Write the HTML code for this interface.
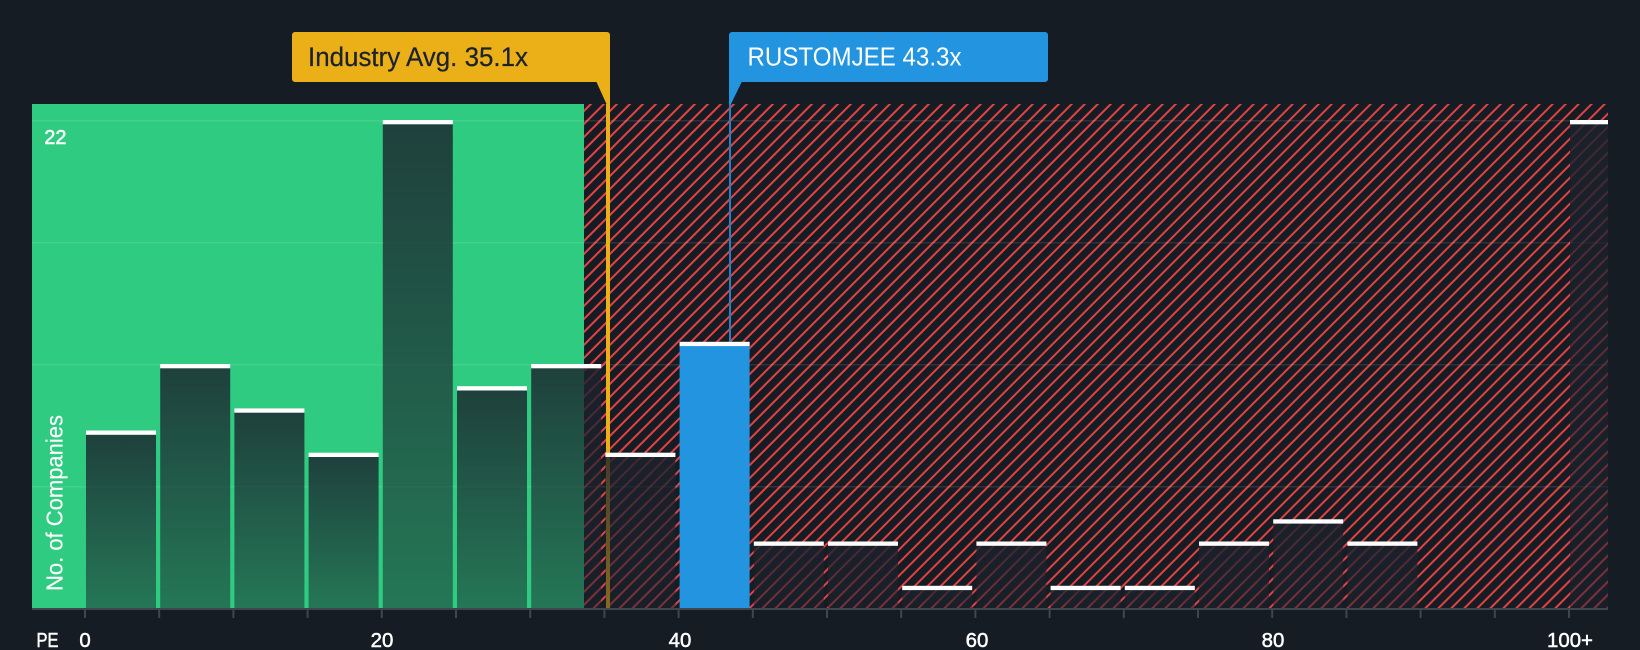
<!DOCTYPE html>
<html>
<head>
<meta charset="utf-8">
<style>
html,body{margin:0;padding:0;background:#151c24;width:1640px;height:650px;overflow:hidden}
svg{display:block}
text{font-family:"Liberation Sans",sans-serif}
</style>
</head>
<body>
<svg width="1640" height="650" viewBox="0 0 1640 650" xmlns="http://www.w3.org/2000/svg">
<defs>
<pattern id="h" patternUnits="userSpaceOnUse" width="9.19" height="9.19" patternTransform="rotate(45)">
<rect x="3.33" y="0" width="2" height="9.19" fill="#e44243"/>
</pattern>
<linearGradient id="g" x1="0" y1="0" x2="0" y2="1">
<stop offset="0" stop-color="#1b222d" stop-opacity=".82"/>
<stop offset="1" stop-color="#1b222d" stop-opacity=".5"/>
</linearGradient>
</defs>
<rect width="1640" height="650" fill="#151c24"/>
<rect x="32" y="104" width="552" height="504" fill="#2ecb80"/>
<rect x="584" y="104" width="1024" height="504" fill="url(#h)"/>
<g fill="#fff" fill-opacity=".1">
<rect x="32" y="120" width="1576" height="1.5"/>
<rect x="32" y="242" width="1576" height="1.5"/>
<rect x="32" y="364" width="1576" height="1.5"/>
<rect x="32" y="486" width="1576" height="1.5"/>
</g>
<rect x="606" y="104" width="4" height="504" fill="#ebb018"/>
<rect x="729" y="104" width="2" height="504" fill="#2a7fc4"/>
<g fill="url(#g)">
<rect x="86" y="434.5" width="70" height="173.5"/>
<rect x="160.2" y="368" width="70" height="240"/>
<rect x="234.4" y="412.4" width="70" height="195.6"/>
<rect x="308.6" y="456.7" width="70" height="151.3"/>
<rect x="382.8" y="124" width="70" height="484"/>
<rect x="457" y="390.2" width="70" height="217.8"/>
<rect x="531.2" y="368" width="70" height="240"/>
<rect x="605.4" y="456.7" width="70" height="151.3"/>
<rect x="753.8" y="545.5" width="70" height="62.5"/>
<rect x="828" y="545.5" width="70" height="62.5"/>
<rect x="902.2" y="589.8" width="70" height="18.2"/>
<rect x="976.4" y="545.5" width="70" height="62.5"/>
<rect x="1050.6" y="589.8" width="70" height="18.2"/>
<rect x="1124.8" y="589.8" width="70" height="18.2"/>
<rect x="1199" y="545.5" width="70" height="62.5"/>
<rect x="1273.2" y="523.3" width="70" height="84.7"/>
<rect x="1347.4" y="545.5" width="70" height="62.5"/>
<rect x="1570" y="124" width="38" height="484"/>
</g>
<rect x="679.6" y="342" width="70" height="266" fill="#2394e0"/>
<g fill="#fff">
<rect x="86" y="430.5" width="70" height="4.3"/>
<rect x="160.2" y="364" width="70" height="4.3"/>
<rect x="234.4" y="408.4" width="70" height="4.3"/>
<rect x="308.6" y="452.7" width="70" height="4.3"/>
<rect x="382.8" y="120" width="70" height="4.3"/>
<rect x="457" y="386.2" width="70" height="4.3"/>
<rect x="531.2" y="364" width="70" height="4.3"/>
<rect x="605.4" y="452.7" width="70" height="4.3"/>
<rect x="679.6" y="341.8" width="70" height="4.3"/>
<rect x="753.8" y="541.5" width="70" height="4.3"/>
<rect x="828" y="541.5" width="70" height="4.3"/>
<rect x="902.2" y="585.8" width="70" height="4.3"/>
<rect x="976.4" y="541.5" width="70" height="4.3"/>
<rect x="1050.6" y="585.8" width="70" height="4.3"/>
<rect x="1124.8" y="585.8" width="70" height="4.3"/>
<rect x="1199" y="541.5" width="70" height="4.3"/>
<rect x="1273.2" y="519.3" width="70" height="4.3"/>
<rect x="1347.4" y="541.5" width="70" height="4.3"/>
<rect x="1570" y="120" width="38" height="4.3"/>
</g>
<rect x="32" y="608" width="1576" height="2" fill="#3f4650"/>
<path fill="#3f4650" d="M84 610h2v8h-2zM158.2 610h2v8h-2zM232.4 610h2v8h-2zM306.6 610h2v8h-2zM380.8 610h2v8h-2zM455 610h2v8h-2zM529.2 610h2v8h-2zM603.4 610h2v8h-2zM677.6 610h2v8h-2zM751.8 610h2v8h-2zM826 610h2v8h-2zM900.2 610h2v8h-2zM974.4 610h2v8h-2zM1048.6 610h2v8h-2zM1122.8 610h2v8h-2zM1197 610h2v8h-2zM1271.2 610h2v8h-2zM1345.4 610h2v8h-2zM1419.6 610h2v8h-2zM1493.8 610h2v8h-2zM1568 610h2v8h-2z"/>
<path fill="#ebb018" d="M295 32H607a3 3 0 0 1 3 3V104H606.5L596.5 82H295a3 3 0 0 1-3-3V35a3 3 0 0 1 3-3z"/>
<path fill="#2394e0" d="M732 32H1045a3 3 0 0 1 3 3V79a3 3 0 0 1-3 3H741.7L731 104H729V35a3 3 0 0 1 3-3z"/>
<text x="308" y="66" font-size="26.5" fill="#1b222d" textLength="220" lengthAdjust="spacingAndGlyphs" stroke="#1b222d" stroke-width=".25">Industry Avg. 35.1x</text>
<text x="747.5" y="65.5" font-size="26" fill="#fff" textLength="214" lengthAdjust="spacingAndGlyphs">RUSTOMJEE 43.3x</text>
<text x="44.3" y="144" font-size="20" fill="#fff" stroke="#fff" stroke-width=".5">22</text>
<text transform="translate(62.3 591) rotate(-90)" font-size="23.5" fill="#fff" stroke="#fff" stroke-width=".15" textLength="176" lengthAdjust="spacingAndGlyphs">No. of Companies</text>
<g font-size="20.4" fill="#fff" stroke="#fff" stroke-width=".5">
<text x="36.5" y="647" textLength="22" lengthAdjust="spacingAndGlyphs">PE</text>
<text x="85" y="647" text-anchor="middle">0</text>
<text x="382" y="647" text-anchor="middle">20</text>
<text x="680" y="647" text-anchor="middle">40</text>
<text x="977" y="647" text-anchor="middle">60</text>
<text x="1273" y="647" text-anchor="middle">80</text>
<text x="1570" y="647" text-anchor="middle">100+</text>
</g>
</svg>
</body>
</html>
